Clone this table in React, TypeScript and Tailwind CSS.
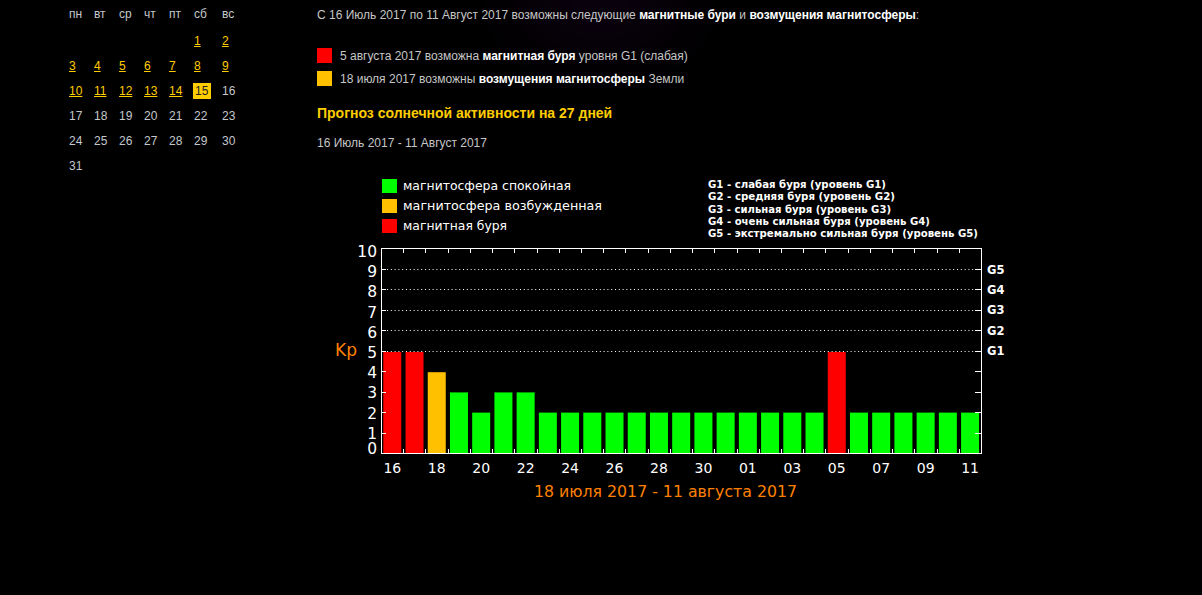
import React from "react";

const days = [
  "16","17","18","19","20","21","22","23","24","25","26","27","28","29","30","31",
  "01","02","03","04","05","06","07","08","09","10","11",
];
const values = [5,5,4,3,2,3,3,2,2,2,2,2,2,2,2,2,2,2,2,2,5,2,2,2,2,2,2];

const colorFor = (v: number) => (v >= 5 ? "#ff0000" : v === 4 ? "#ffc000" : "#00ff00");

const X0 = 381;
const X1 = 981;
const Y0 = 453;
const Y1 = 248;
const STEP = (X1 - X0) / 27;
const yOf = (v: number) => Y0 - v * 20.5;

function Chart() {
  const legendRight = [
    { t: "G1 - слабая буря (уровень G1)", w: 178 },
    { t: "G2 - средняя буря (уровень G2)", w: 187 },
    { t: "G3 - сильная буря (уровень G3)", w: 183 },
    { t: "G4 - очень сильная буря (уровень G4)", w: 222 },
    { t: "G5 - экстремально сильная буря (уровень G5)", w: 270 },
  ];
  const legendLeft = [
    { c: "#00ff00", t: "магнитосфера спокойная", w: 168 },
    { c: "#ffc000", t: "магнитосфера возбужденная", w: 199 },
    { c: "#ff0000", t: "магнитная буря", w: 104 },
  ];
  return (
    <svg
      width={700}
      height={345}
      viewBox="317 160 700 345"
      className="block mt-[9px]"
      style={{ fontFamily: "'DejaVu Sans', Verdana, sans-serif" }}
    >
      {legendLeft.map((l, i) => (
        <g key={i}>
          <rect x={382} y={179 + i * 20} width={15} height={14} fill={l.c} />
          <text x={403} y={190 + i * 20} fontSize={13} fill="#fff" textLength={l.w} lengthAdjust="spacingAndGlyphs">
            {l.t}
          </text>
        </g>
      ))}
      {legendRight.map((l, i) => (
        <text
          key={i}
          x={708}
          y={188 + i * 12.3}
          fontSize={10}
          fontWeight="bold"
          fill="#fff"
          textLength={l.w}
          lengthAdjust="spacingAndGlyphs"
        >
          {l.t}
        </text>
      ))}

      {[5, 6, 7, 8, 9].map((v) => (
        <line
          key={v}
          x1={X0 + 6}
          x2={X1 - 4}
          y1={Math.round(yOf(v)) + 0.5}
          y2={Math.round(yOf(v)) + 0.5}
          stroke="#fff"
          strokeWidth={1}
          strokeDasharray="1 2.8"
        />
      ))}

      {values.map((v, i) => (
        <rect
          key={i}
          x={X0 + STEP * i + 2.3}
          y={Y0 - v * 20.2}
          width={18}
          height={v * 20.2}
          fill={colorFor(v)}
        />
      ))}

      {Array.from({ length: 11 }).map((_, v) => (
        <g key={v}>
          <line x1={X0} x2={X0 + 5} y1={Math.round(yOf(v)) + 0.5} y2={Math.round(yOf(v)) + 0.5} stroke="#fff" />
          <line x1={X1 - 6} x2={X1} y1={Math.round(yOf(v)) + 0.5} y2={Math.round(yOf(v)) + 0.5} stroke="#fff" />
        </g>
      ))}

      {Array.from({ length: 26 }).map((_, k) => {
        const x = Math.round(X0 + STEP * (k + 1)) + 0.5;
        return (
          <g key={k}>
            <line x1={x} x2={x} y1={Y1} y2={Y1 + 5} stroke="#fff" />
            <line x1={x} x2={x} y1={Y0 - 4} y2={Y0} stroke="#fff" />
          </g>
        );
      })}

      <rect x={X0 + 0.5} y={Y1 + 0.5} width={X1 - X0} height={Y0 - Y1} fill="none" stroke="#fff" strokeWidth={1} />

      {Array.from({ length: 11 }).map((_, v) => (
        <text
          key={v}
          x={377}
          y={(v === 0 ? 447.5 : Y0 - 20.2 * v) + 6}
          fontSize={15.5}
          fill="#fff"
          textAnchor="end"
        >
          {v}
        </text>
      ))}

      {["G1", "G2", "G3", "G4", "G5"].map((g, i) => (
        <text key={g} x={987} y={355 - i * 20.3} fontSize={11.5} fontWeight="bold" fill="#fff">
          {g}
        </text>
      ))}

      <text x={335} y={356} fontSize={17} fill="#ff8000">
        Kp
      </text>

      {days.map((d, i) =>
        i % 2 === 0 ? (
          <text key={i} x={X0 + STEP * i + 11.3} y={472.7} fontSize={14} fill="#fff" textAnchor="middle">
            {d}
          </text>
        ) : null
      )}

      <text x={534} y={497.3} fontSize={15} fill="#ff8000" textLength={263} lengthAdjust="spacingAndGlyphs">
        18 июля 2017 - 11 августа 2017
      </text>
    </svg>
  );
}

type Cell = { n?: string; link?: boolean; today?: boolean };

function Calendar() {
  const head = ["пн", "вт", "ср", "чт", "пт", "сб", "вс"];
  const rows: Cell[][] = [
    [{}, {}, {}, {}, {}, { n: "1", link: true }, { n: "2", link: true }],
    ["3", "4", "5", "6", "7", "8", "9"].map((n) => ({ n, link: true })),
    [
      { n: "10", link: true },
      { n: "11", link: true },
      { n: "12", link: true },
      { n: "13", link: true },
      { n: "14", link: true },
      { n: "15", today: true },
      { n: "16" },
    ],
    ["17", "18", "19", "20", "21", "22", "23"].map((n) => ({ n })),
    ["24", "25", "26", "27", "28", "29", "30"].map((n) => ({ n })),
    [{ n: "31" }, {}, {}, {}, {}, {}, {}],
  ];
  return (
    <div className="w-[317px] shrink-0 pl-[69px] pt-[2px] text-[12px] text-[#c4c8cc]">
      <div className="grid grid-cols-[25px_25px_25px_25px_25px_28px_25px] h-[25px] leading-[25px]">
        {head.map((h) => (
          <div key={h}>{h}</div>
        ))}
      </div>
      <div className="mt-[2px]">
        {rows.map((r, ri) => (
          <div key={ri} className="grid grid-cols-[25px_25px_25px_25px_25px_28px_25px] h-[25px] leading-[25px]">
            {r.map((c, ci) => (
              <div key={ci}>
                {c.today ? (
                  <span className="inline-block bg-[#ffcc00] text-[#222] leading-[16px] pl-[2px] pr-[3px] -ml-[1px]">
                    {c.n}
                  </span>
                ) : c.link ? (
                  <span className="text-[#ffcc00] underline">{c.n}</span>
                ) : (
                  <span>{c.n}</span>
                )}
              </div>
            ))}
          </div>
        ))}
      </div>
    </div>
  );
}

export default function App() {
  return (
    <div
      className="relative w-[1202px] h-[595px] bg-black overflow-hidden"
      style={{ fontFamily: "'Liberation Sans', Arial, sans-serif" }}
    >
      <div className="absolute left-[520px] -top-[40px] w-[160px] h-[80px] rounded-full bg-[#2a0838] opacity-35 blur-2xl" />
      <div className="relative flex">
        <Calendar />
        <div className="text-[12px] text-[#c6c6c6]">
          <div className="mt-[7px] leading-[16px]">
            С 16 Июль 2017 по 11 Август 2017 возможны следующие <b className="text-white">магнитные бури</b> и{" "}
            <b className="text-white">возмущения магнитосферы</b>:
          </div>
          <div className="mt-[25px] flex flex-col gap-[8px]">
            <div className="flex items-center h-[15px]">
              <span className="w-[15px] h-[15px] bg-[#ff0000] mr-[8px]" />
              <span>
                5 августа 2017 возможна <b className="text-white">магнитная буря</b> уровня G1 (слабая)
              </span>
            </div>
            <div className="flex items-center h-[15px]">
              <span className="w-[15px] h-[15px] bg-[#ffc000] mr-[8px]" />
              <span>
                18 июля 2017 возможны <b className="text-white">возмущения магнитосферы</b> Земли
              </span>
            </div>
          </div>
          <div className="mt-[19px] leading-[16px] text-[14px] font-bold text-[#ffcc00]">
            Прогноз солнечной активности на 27 дней
          </div>
          <div className="mt-[14px] leading-[16px]">16 Июль 2017 - 11 Август 2017</div>
          <Chart />
        </div>
      </div>
    </div>
  );
}
